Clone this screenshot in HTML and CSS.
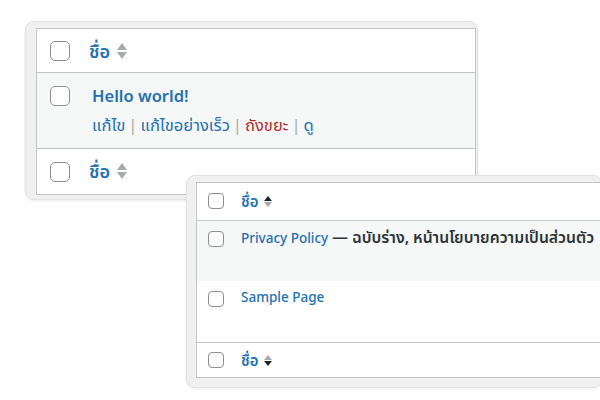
FILE: index.html
```html
<!DOCTYPE html>
<html lang="th">
<head>
<meta charset="utf-8">
<link rel="stylesheet" href="styles.css">
</head>
<body>
<div class="win win-a">
  <div class="tbl">
    <div class="row head">
      <span class="cb"></span>
      <a class="col">ชื่อ</a>
      <span class="sort"><i class="up"></i><i class="dn"></i></span>
    </div>
    <div class="row body alt">
      <span class="cb"></span>
      <div class="cell">
        <a class="title">Hello world!</a>
        <div class="actions"><a>แก้ไข</a><span class="sep">|</span><a>แก้ไขอย่างเร็ว</a><span class="sep">|</span><a class="trash">ถังขยะ</a><span class="sep">|</span><a>ดู</a></div>
      </div>
    </div>
    <div class="row foot">
      <span class="cb"></span>
      <a class="col">ชื่อ</a>
      <span class="sort"><i class="up"></i><i class="dn"></i></span>
    </div>
  </div>
</div>
<div class="win win-b">
  <div class="tbl">
    <div class="row head">
      <span class="cb"></span>
      <a class="col">ชื่อ</a>
      <span class="sort"><i class="up on"></i><i class="dn"></i></span>
    </div>
    <div class="row body alt">
      <span class="cb"></span>
      <div class="cell"><a class="title">Privacy Policy</a><span class="state"> — ฉบับร่าง, หน้านโยบายความเป็นส่วนตัว</span></div>
    </div>
    <div class="row body">
      <span class="cb"></span>
      <div class="cell"><a class="title">Sample Page</a></div>
    </div>
    <div class="row foot">
      <span class="cb"></span>
      <a class="col">ชื่อ</a>
      <span class="sort"><i class="up"></i><i class="dn on"></i></span>
    </div>
  </div>
</div>
</body>
</html>
```

FILE: styles.css
```css
html, body {
  margin: 0;
  padding: 0;
  background: #ffffff;
  width: 600px;
  height: 400px;
  overflow: hidden;
  position: relative;
  font-family: "Noto Sans", "Noto Sans Thai", "Noto Sans Thai UI", sans-serif;
}

a { color: #2271b1; text-decoration: none; }

.win {
  position: absolute;
  box-sizing: border-box;
  background: #f0f0f1;
  border: 1px solid #e2e2e4;
  border-radius: 9px;
  box-shadow: 0 1px 3px rgba(0,0,0,0.08);
}

.win-a {
  left: 25px;
  top: 21px;
  width: 453px;
  height: 179px;
  padding: 6px 1px 4px 10px;
}

.win-b {
  left: 186px;
  top: 175px;
  width: 416px;
  height: 213px;
  padding: 6px 0 9px 9px;
}

.tbl {
  background: #ffffff;
  border: 1px solid #c3c4c7;
  height: 100%;
  box-sizing: border-box;
  display: flex;
  flex-direction: column;
}

.row {
  display: flex;
  align-items: center;
  box-sizing: border-box;
}
.row + .row { border-top: 1px solid #c3c4c7; }
.row.body + .row.body { border-top: none; }
.alt { background: #f6f7f7; }

.cb {
  flex: none;
  box-sizing: border-box;
  border: 1px solid #8c8f94;
  background: #ffffff;
}

.sort {
  display: inline-flex;
  flex-direction: column;
  justify-content: center;
}
.sort i {
  display: block;
  width: 0;
  height: 0;
  border-left: 5px solid transparent;
  border-right: 5px solid transparent;
}
.sort .up { border-bottom: 7px solid #a7aaad; }
.sort .dn { border-top: 7px solid #a7aaad; }
.sort .up.on { border-bottom-color: #1d2327; }
.sort .dn.on { border-top-color: #1d2327; }

.sep { color: #a7aaad; margin: 0 4px; }
.trash { color: #b32d2e; }

/* window A (larger zoom) */
.win-a .head { height: 44px; padding-left: 13px; }
.win-a .foot { height: 47px; padding-left: 13px; }
.win-a .body { height: 76px; padding-left: 13px; align-items: flex-start; }
.win-a .cb { width: 20px; height: 20px; border-radius: 5px; }
.win-a .head .cb, .win-a .foot .cb { margin-top: 1px; }
.win-a .body .cb { margin-top: 13px; }
.win-a .col { margin-left: 19px; font-size: 18px; font-weight: 600; line-height: 24px; }
.win-a .sort { margin-left: 7px; gap: 2px; }
.win-a .cell { margin-left: 22px; padding-top: 10px; }
.win-a .title { font-size: 16.5px; font-weight: 600; display: block; line-height: 26px; }
.win-a .actions { font-size: 16.6px; margin-top: 4px; line-height: 23px; }
.win-a .sep { margin: 0 3px; }

/* window B (smaller zoom) */
.win-b .head { height: 37px; padding-left: 11px; }
.win-b .foot { height: 35px; padding-left: 11px; }
.win-b .body { height: 62px; padding-left: 11px; align-items: flex-start; }
.win-b .cb { width: 16px; height: 16px; border-radius: 4px; }
.win-b .body .cb { margin-top: 10px; }
.win-b .col { margin-left: 17px; font-size: 15px; font-weight: 600; line-height: 20px; }
.win-b .sort { margin-left: 5px; gap: 1px; }
.win-b .sort i { border-left-width: 4px; border-right-width: 4px; }
.win-b .sort .up { border-bottom-width: 5px; }
.win-b .sort .dn { border-top-width: 5px; }
.win-b .cell { margin-left: 17px; padding-top: 5px; font-size: 14px; line-height: 22px; white-space: nowrap; }
.win-b .title { font-weight: 500; font-size: 13.5px; }
.state { color: #2c3338; font-weight: 600; font-size: 15.7px; }
```
